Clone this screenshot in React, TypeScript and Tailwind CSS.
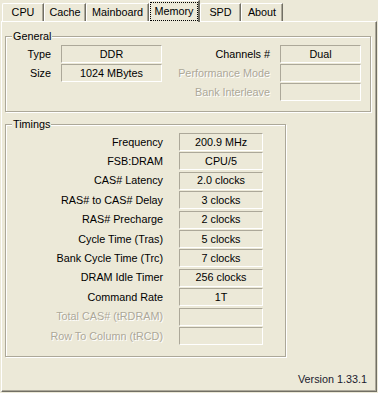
import React from "react"

const tabs = [
  { name: "CPU", w: "w-[42px]" },
  { name: "Cache", w: "w-[42px]" },
  { name: "Mainboard", w: "w-[63px]" },
  { name: "Memory", w: "w-[51px]", active: true },
  { name: "SPD", w: "w-[41px]" },
  { name: "About", w: "w-[42px]" },
]

const timings: { label: string; value: string; disabled?: boolean }[] = [
  { label: "Frequency", value: "200.9 MHz" },
  { label: "FSB:DRAM", value: "CPU/5" },
  { label: "CAS# Latency", value: "2.0 clocks" },
  { label: "RAS# to CAS# Delay", value: "3 clocks" },
  { label: "RAS# Precharge", value: "2 clocks" },
  { label: "Cycle Time (Tras)", value: "5 clocks" },
  { label: "Bank Cycle Time (Trc)", value: "7 clocks" },
  { label: "DRAM Idle Timer", value: "256 clocks" },
  { label: "Command Rate", value: "1T" },
  { label: "Total CAS# (tRDRAM)", value: "", disabled: true },
  { label: "Row To Column (tRCD)", value: "", disabled: true },
]

function ValueBox({ value, w }: { value: string; w: string }) {
  return (
    <div
      className={`${w} h-[18px] border border-t-[#ACA899] border-l-[#ACA899] border-b-white border-r-white flex items-center justify-center text-black leading-none`}
    >
      {value}
    </div>
  )
}

function Label({ text, disabled }: { text: string; disabled?: boolean }) {
  return (
    <div
      className={`h-[18px] flex items-center justify-end leading-none whitespace-nowrap ${
        disabled ? "text-[#ACA899] [text-shadow:1px_1px_0_#fff]" : "text-black"
      }`}
    >
      {text}
    </div>
  )
}

function GroupBox({ title, className, children }: { title: string; className: string; children: React.ReactNode }) {
  return (
    <div className={`relative border border-[#ACA899] shadow-[inset_1px_1px_0_#fff,1px_1px_0_#fff] ${className}`}>
      <span className="absolute -top-[8px] left-[6px] bg-[#ECE9D8] px-[1px] leading-[14px] text-black">{title}</span>
      {children}
    </div>
  )
}

export default function App() {
  return (
    <div className="w-[378px] h-[393px] bg-[#ECE9D8] font-['Liberation_Sans',Arial,sans-serif] text-[10.8px] overflow-hidden">
      {/* tab strip */}
      <div className="flex items-end h-[21px] pl-[2px]">
        {tabs.map((t) =>
          t.active ? (
            <div
              key={t.name}
              className={`${t.w} relative z-10 h-[22px] -mb-[1px] bg-[#ECE9D8] border-l border-t border-white border-r-2 border-r-[#716F64] rounded-tl-[2px] flex items-start justify-center pt-[1px]`}
            >
              <div className="border border-dotted border-black px-[2px] h-[19px] w-[48px] flex items-center justify-center leading-none">
                {t.name}
              </div>
            </div>
          ) : (
            <div
              key={t.name}
              className={`${t.w} h-[18px] border-l border-t border-white border-r border-r-[#716F64] shadow-[inset_-1px_0_0_#ACA899] rounded-tl-[2px] flex items-center justify-center leading-none`}
            >
              {t.name}
            </div>
          )
        )}
      </div>

      {/* panel */}
      <div className="ml-[1px] w-[376px] h-[371px] border-l border-t border-white border-r border-b border-r-[#716F64] border-b-[#716F64] shadow-[inset_-1px_-1px_0_#ACA899] flex flex-col">
        <GroupBox title="General" className="ml-[3px] mt-[14px] w-[366px] h-[76px]">
          <div className="flex pt-[8px]">
            <div className="flex flex-col gap-[1px] w-[44px] ml-[1px]">
              <Label text="Type" />
              <Label text="Size" />
            </div>
            <div className="flex flex-col gap-[1px] ml-[10px]">
              <ValueBox value="DDR" w="w-[101px]" />
              <ValueBox value="1024 MBytes" w="w-[101px]" />
            </div>
            <div className="flex flex-col gap-[1px] w-[104px] ml-[4px]">
              <Label text="Channels #" />
              <Label text="Performance Mode" disabled />
              <Label text="Bank Interleave" disabled />
            </div>
            <div className="flex flex-col gap-[1px] ml-[10px]">
              <ValueBox value="Dual" w="w-[81px]" />
              <ValueBox value="" w="w-[81px]" />
              <ValueBox value="" w="w-[81px]" />
            </div>
          </div>
        </GroupBox>

        <GroupBox title="Timings" className="ml-[3px] mt-[12px] w-[281px] h-[233px]">
          <div className="flex pt-[8px]">
            <div className="flex flex-col gap-[1.4px] w-[157px]">
              {timings.map((r) => (
                <Label key={r.label} text={r.label} disabled={r.disabled} />
              ))}
            </div>
            <div className="flex flex-col gap-[1.4px] ml-[16px]">
              {timings.map((r) => (
                <ValueBox key={r.label} value={r.value} w="w-[84px]" />
              ))}
            </div>
          </div>
        </GroupBox>

        <div className="flex justify-end mt-auto mb-[6px] pr-[9px] leading-none text-[#1a1a2e]">Version 1.33.1</div>
      </div>
    </div>
  )
}
